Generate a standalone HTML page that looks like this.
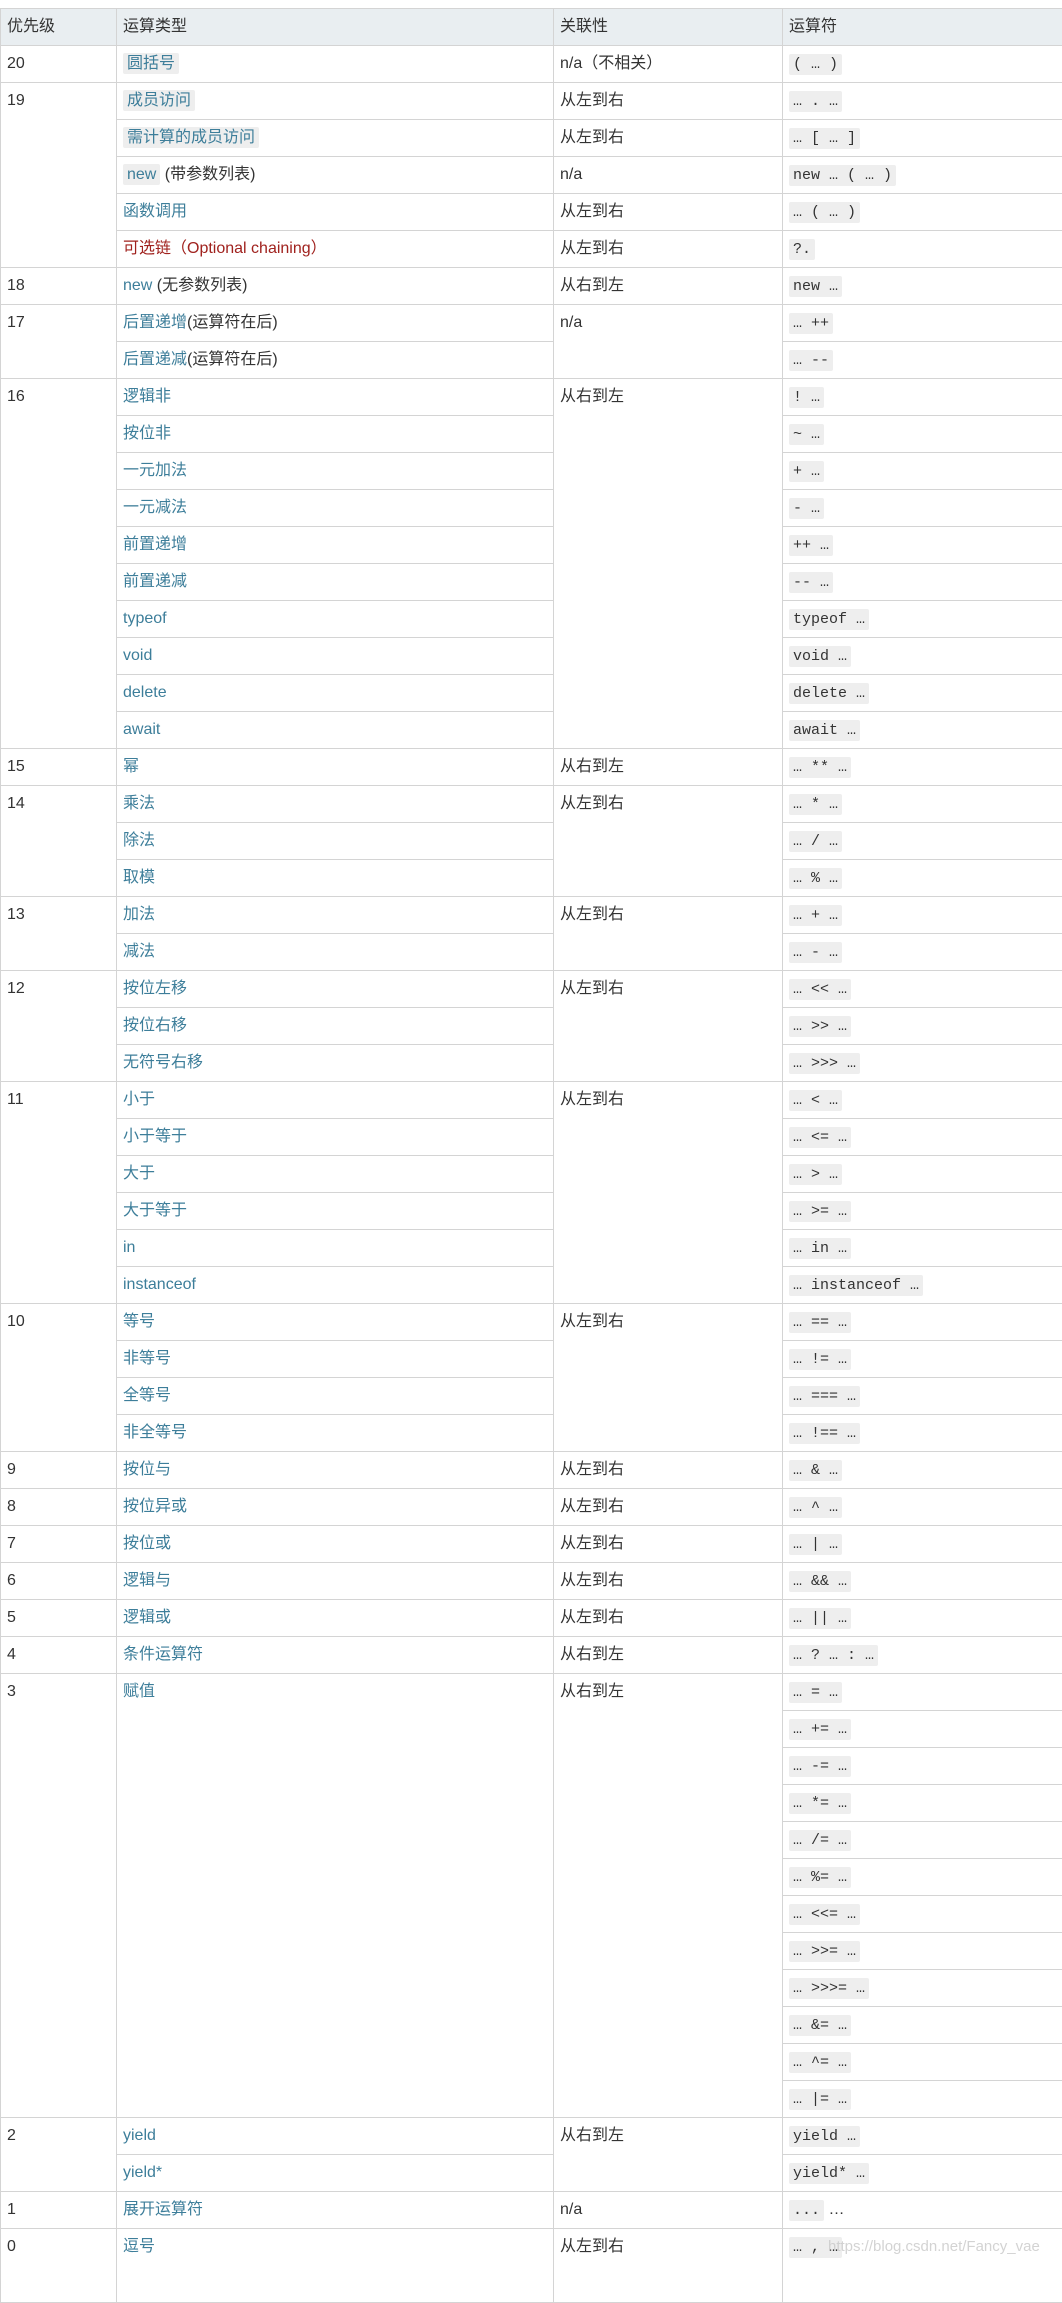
<!DOCTYPE html>
<html><head><meta charset="utf-8"><style>
html,body{margin:0;padding:0;background:#fff;}
body{width:1062px;height:2264px;overflow:hidden;position:relative;font-family:"Liberation Sans","Noto Sans CJK SC",sans-serif;font-size:16px;color:#333;}
table{position:absolute;top:8px;left:0;border-collapse:collapse;table-layout:fixed;width:1063px;}
td,th{border:1px solid #d4d4d4;padding:7px 5px 0 6px;vertical-align:top;line-height:22px;text-align:left;font-weight:normal;white-space:nowrap;overflow:hidden;}
th{background:#e9eef1;color:#333;}
tr{height:37px;}
a{color:#3d7e9a;text-decoration:none;}
a.r{color:#a0221e;}
code{font-family:"Liberation Mono","DejaVu Sans Mono",monospace;font-size:15px;background:#eee;border-radius:2px;padding:2px 4px;color:#333;}
a code{color:#3d7e9a;font-family:"Liberation Sans","Noto Sans CJK SC",sans-serif;font-size:16px;}
.wm{position:absolute;left:828px;top:2238px;font-size:15px;color:rgba(200,200,200,0.8);font-family:"Liberation Sans",sans-serif;}
</style></head><body>
<table>
<colgroup><col style="width:116px"><col style="width:437px"><col style="width:229px"><col style="width:281px"></colgroup>
<tr><th>优先级</th><th>运算类型</th><th>关联性</th><th>运算符</th></tr>
<tr><td>20</td><td><a><code>圆括号</code></a></td><td>n/a（不相关）</td><td><code>( … )</code></td></tr>
<tr><td rowspan="5">19</td><td><a><code>成员访问</code></a></td><td>从左到右</td><td><code>… . …</code></td></tr>
<tr><td><a><code>需计算的成员访问</code></a></td><td>从左到右</td><td><code>… [ … ]</code></td></tr>
<tr><td><a><code>new</code></a> (带参数列表)</td><td>n/a</td><td><code>new … ( … )</code></td></tr>
<tr><td><a>函数调用</a></td><td>从左到右</td><td><code>… ( … )</code></td></tr>
<tr><td><a class="r">可选链（Optional chaining）</a></td><td>从左到右</td><td><code>?.</code></td></tr>
<tr><td>18</td><td><a>new</a> (无参数列表)</td><td>从右到左</td><td><code>new …</code></td></tr>
<tr><td rowspan="2">17</td><td><a>后置递增</a>(运算符在后)</td><td rowspan="2">n/a</td><td><code>… ++</code></td></tr>
<tr><td><a>后置递减</a>(运算符在后)</td><td><code>… --</code></td></tr>
<tr><td rowspan="10">16</td><td><a>逻辑非</a></td><td rowspan="10">从右到左</td><td><code>! …</code></td></tr>
<tr><td><a>按位非</a></td><td><code>~ …</code></td></tr>
<tr><td><a>一元加法</a></td><td><code>+ …</code></td></tr>
<tr><td><a>一元减法</a></td><td><code>- …</code></td></tr>
<tr><td><a>前置递增</a></td><td><code>++ …</code></td></tr>
<tr><td><a>前置递减</a></td><td><code>-- …</code></td></tr>
<tr><td><a>typeof</a></td><td><code>typeof …</code></td></tr>
<tr><td><a>void</a></td><td><code>void …</code></td></tr>
<tr><td><a>delete</a></td><td><code>delete …</code></td></tr>
<tr><td><a>await</a></td><td><code>await …</code></td></tr>
<tr><td>15</td><td><a>幂</a></td><td>从右到左</td><td><code>… ** …</code></td></tr>
<tr><td rowspan="3">14</td><td><a>乘法</a></td><td rowspan="3">从左到右</td><td><code>… * …</code></td></tr>
<tr><td><a>除法</a></td><td><code>… / …</code></td></tr>
<tr><td><a>取模</a></td><td><code>… % …</code></td></tr>
<tr><td rowspan="2">13</td><td><a>加法</a></td><td rowspan="2">从左到右</td><td><code>… + …</code></td></tr>
<tr><td><a>减法</a></td><td><code>… - …</code></td></tr>
<tr><td rowspan="3">12</td><td><a>按位左移</a></td><td rowspan="3">从左到右</td><td><code>… &lt;&lt; …</code></td></tr>
<tr><td><a>按位右移</a></td><td><code>… &gt;&gt; …</code></td></tr>
<tr><td><a>无符号右移</a></td><td><code>… &gt;&gt;&gt; …</code></td></tr>
<tr><td rowspan="6">11</td><td><a>小于</a></td><td rowspan="6">从左到右</td><td><code>… &lt; …</code></td></tr>
<tr><td><a>小于等于</a></td><td><code>… &lt;= …</code></td></tr>
<tr><td><a>大于</a></td><td><code>… &gt; …</code></td></tr>
<tr><td><a>大于等于</a></td><td><code>… &gt;= …</code></td></tr>
<tr><td><a>in</a></td><td><code>… in …</code></td></tr>
<tr><td><a>instanceof</a></td><td><code>… instanceof …</code></td></tr>
<tr><td rowspan="4">10</td><td><a>等号</a></td><td rowspan="4">从左到右</td><td><code>… == …</code></td></tr>
<tr><td><a>非等号</a></td><td><code>… != …</code></td></tr>
<tr><td><a>全等号</a></td><td><code>… === …</code></td></tr>
<tr><td><a>非全等号</a></td><td><code>… !== …</code></td></tr>
<tr><td>9</td><td><a>按位与</a></td><td>从左到右</td><td><code>… &amp; …</code></td></tr>
<tr><td>8</td><td><a>按位异或</a></td><td>从左到右</td><td><code>… ^ …</code></td></tr>
<tr><td>7</td><td><a>按位或</a></td><td>从左到右</td><td><code>… | …</code></td></tr>
<tr><td>6</td><td><a>逻辑与</a></td><td>从左到右</td><td><code>… &amp;&amp; …</code></td></tr>
<tr><td>5</td><td><a>逻辑或</a></td><td>从左到右</td><td><code>… || …</code></td></tr>
<tr><td>4</td><td><a>条件运算符</a></td><td>从右到左</td><td><code>… ? … : …</code></td></tr>
<tr><td rowspan="12">3</td><td rowspan="12"><a>赋值</a></td><td rowspan="12">从右到左</td><td><code>… = …</code></td></tr>
<tr><td><code>… += …</code></td></tr>
<tr><td><code>… -= …</code></td></tr>
<tr><td><code>… *= …</code></td></tr>
<tr><td><code>… /= …</code></td></tr>
<tr><td><code>… %= …</code></td></tr>
<tr><td><code>… &lt;&lt;= …</code></td></tr>
<tr><td><code>… &gt;&gt;= …</code></td></tr>
<tr><td><code>… &gt;&gt;&gt;= …</code></td></tr>
<tr><td><code>… &amp;= …</code></td></tr>
<tr><td><code>… ^= …</code></td></tr>
<tr><td><code>… |= …</code></td></tr>
<tr><td rowspan="2">2</td><td><a>yield</a></td><td rowspan="2">从右到左</td><td><code>yield …</code></td></tr>
<tr><td><a>yield*</a></td><td><code>yield* …</code></td></tr>
<tr><td>1</td><td><a>展开运算符</a></td><td>n/a</td><td><code>...</code> …</td></tr>
<tr><td rowspan="2">0</td><td rowspan="2"><a>逗号</a></td><td rowspan="2">从左到右</td><td rowspan="2"><code>… , …</code></td></tr>
<tr></tr>
</table>
<div class="wm">https://blog.csdn.net/Fancy_vae</div>
</body></html>
